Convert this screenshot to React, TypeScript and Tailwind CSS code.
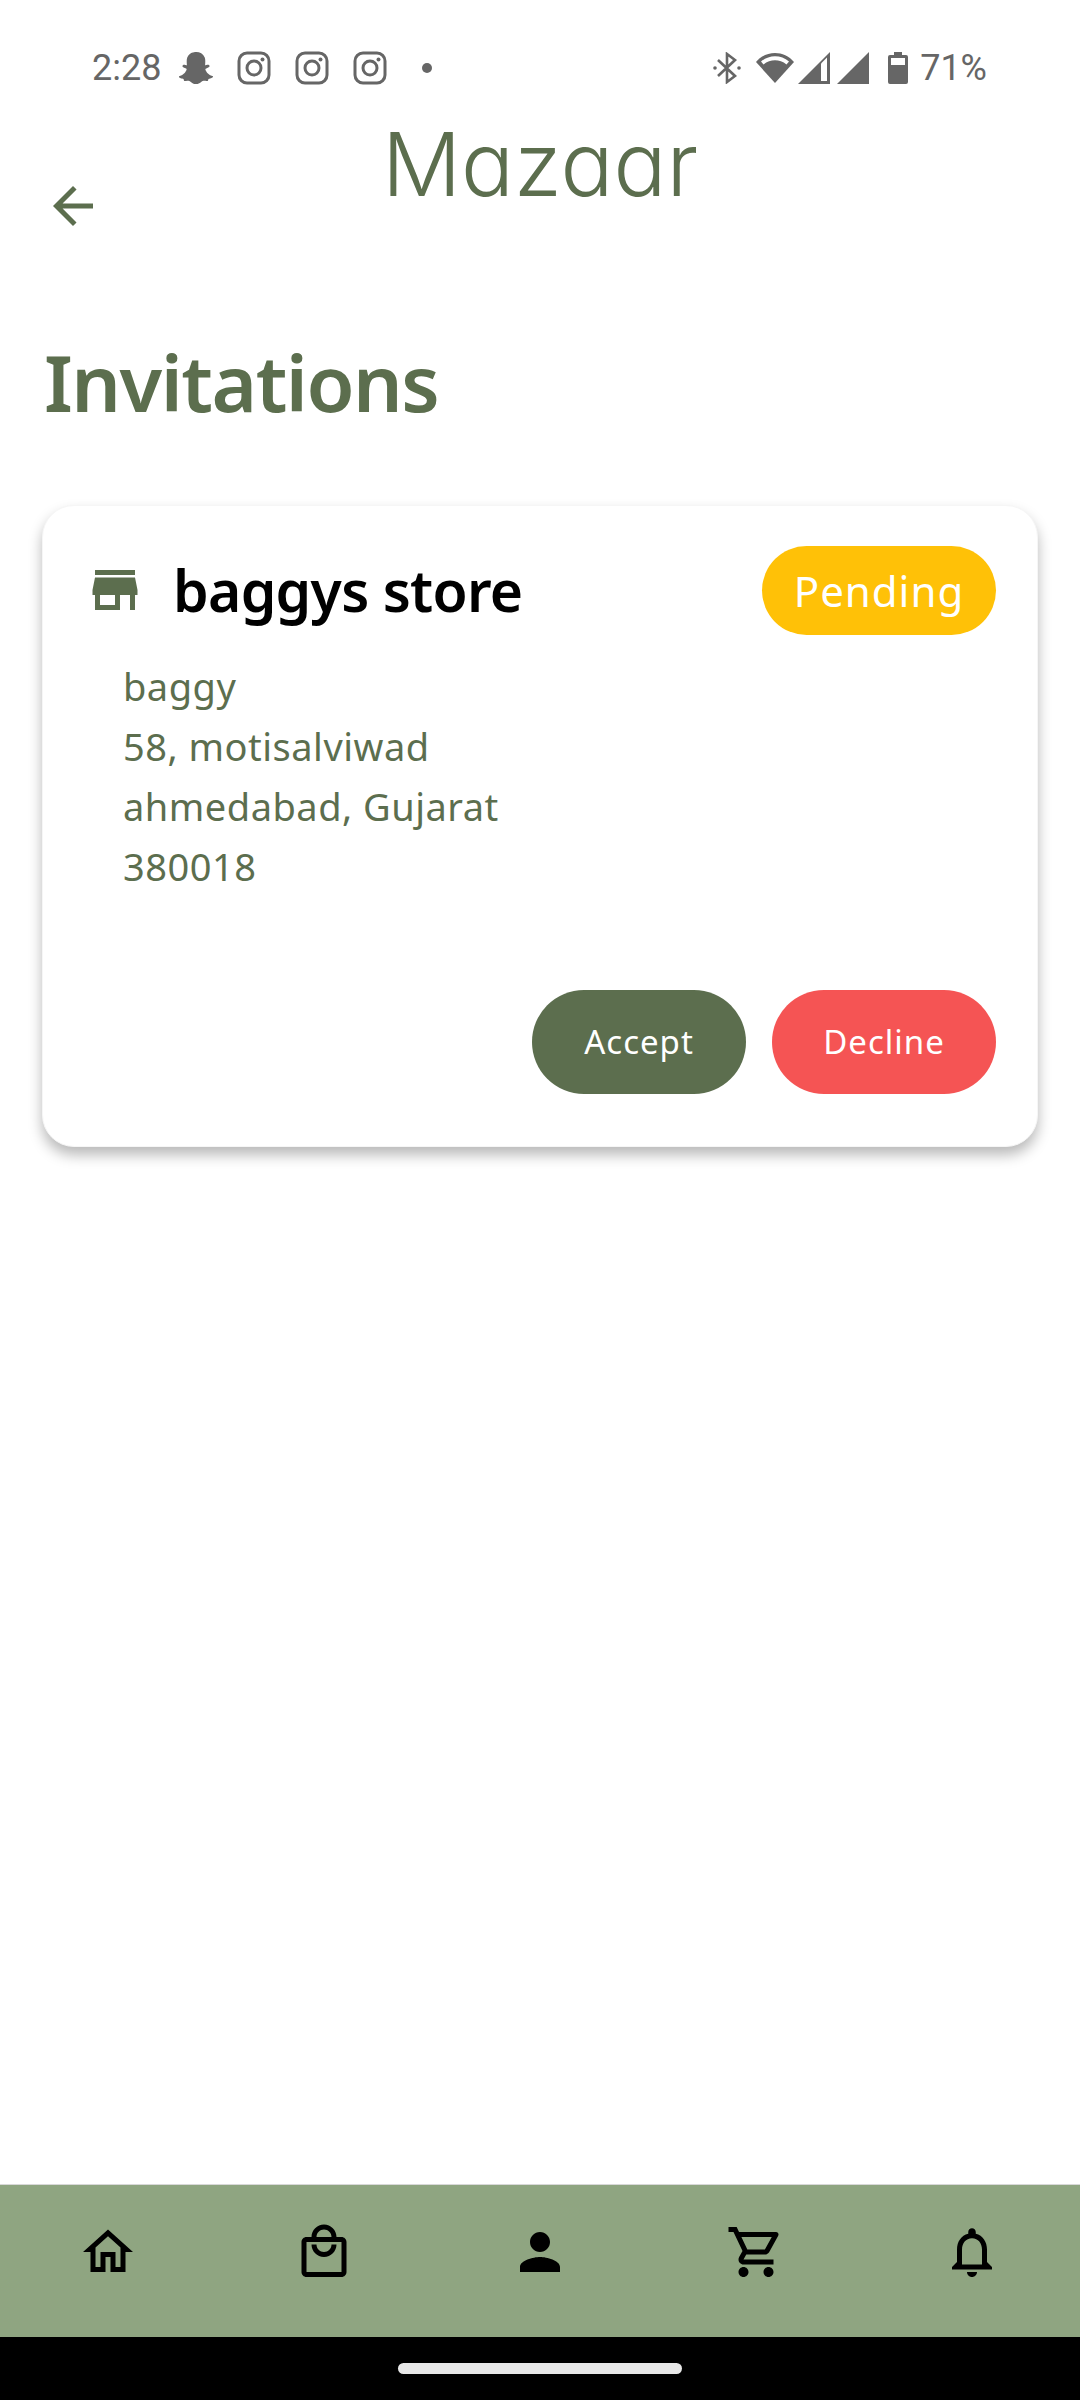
import { FaSnapchatGhost } from 'react-icons/fa';

const GREEN = 'text-[#5c6e4e]';

function Mi({ d, className }: { d: string; className?: string }) {
  return (
    <svg viewBox="0 0 24 24" fill="currentColor" className={className}>
      <path d={d} />
    </svg>
  );
}

function Insta() {
  return (
    <svg viewBox="0 0 34 34" fill="none" stroke="#666" strokeWidth="3" className="w-[34px] h-[34px]">
      <rect x="2" y="2" width="30" height="30" rx="8" />
      <circle cx="17" cy="17" r="7" />
      <circle cx="25.5" cy="8.5" r="2" fill="#666" stroke="none" />
    </svg>
  );
}

const navIcons = [
  'M12 5.69l5 4.5V18h-2v-6H9v6H7v-7.81l5-4.5M12 3L2 12h3v8h6v-6h2v6h6v-8h3L12 3z',
  'M19 6h-2c0-2.76-2.24-5-5-5S7 3.24 7 6H5c-1.1 0-2 .9-2 2v12c0 1.1.9 2 2 2h14c1.1 0 2-.9 2-2V8c0-1.1-.9-2-2-2zm-7-3c1.66 0 3 1.34 3 3H9c0-1.66 1.34-3 3-3zm7 17H5V8h14v12zm-7-8c-1.66 0-3-1.34-3-3H7c0 2.76 2.24 5 5 5s5-2.24 5-5h-2c0 1.66-1.34 3-3 3z',
  'M12 12c2.21 0 4-1.79 4-4s-1.79-4-4-4-4 1.79-4 4 1.79 4 4 4zm0 2c-2.67 0-8 1.34-8 4v2h16v-2c0-2.66-5.33-4-8-4z',
  'M15.55 13c.75 0 1.41-.41 1.75-1.03l3.58-6.49c.37-.66-.11-1.48-.87-1.48H5.21l-.94-2H1v2h2l3.6 7.59-1.35 2.44C4.52 15.37 5.48 17 7 17h12v-2H7l1.1-2h7.45zM6.16 6h12.15l-2.76 5H8.53L6.16 6zM7 18c-1.1 0-1.99.9-1.99 2S5.9 22 7 22s2-.9 2-2-.9-2-2-2zm10 0c-1.1 0-1.99.9-1.99 2s.89 2 1.99 2 2-.9 2-2-.9-2-2-2z',
  'M12 22c1.1 0 2-.9 2-2h-4c0 1.1.9 2 2 2zm6-6v-5c0-3.07-1.63-5.64-4.5-6.32V4c0-.83-.67-1.5-1.5-1.5s-1.5.67-1.5 1.5v.68C7.64 5.36 6 7.92 6 11v5l-2 2v1h16v-1l-2-2zm-2 1H8v-6c0-2.48 1.51-4.5 4-4.5s4 2.02 4 4.5v6z',
];

function StatusBar() {
  return (
    <div className="h-[92px] pt-[44px] pl-[92px] pr-[93px] flex items-start justify-between text-[#666] font-['Roboto',sans-serif] text-[36px] leading-[48px]">
      <div className="flex items-center h-[48px]">
        <span className="w-[72px]">2:28</span>
        <FaSnapchatGhost className="w-[36px] h-[34px] ml-[14px] text-[#666]" />
        <div className="flex items-center gap-[24px] ml-[23px]">
          <Insta />
          <Insta />
          <Insta />
        </div>
        <div className="w-[10px] h-[10px] rounded-full bg-[#666] ml-[35px]" />
      </div>
      <div className="flex items-center h-[48px]">
        <svg viewBox="0 0 28 32" className="w-[28px] h-[32px]" fill="none" stroke="#666" strokeWidth="2.6">
          <path d="M5 8l17 16-8 6V2l8 6L5 24" />
          <circle cx="2" cy="16" r="1.8" fill="#666" stroke="none" />
          <circle cx="26" cy="16" r="1.8" fill="#666" stroke="none" />
        </svg>
        <svg viewBox="0 0 40 32" className="w-[40px] h-[32px] ml-[14px]">
          <path d="M20 31L1 10C6 4 13 1 20 1s14 3 19 9L20 31z" fill="#666" />
          <path d="M6 9.5C10 6 15 4.2 20 4.2S30 6 34 9.5L31.5 12.5C28 9.5 24 8.2 20 8.2S12 9.5 8.5 12.5z" fill="#fff" />
        </svg>
        <svg viewBox="0 0 32 32" className="w-[32px] h-[32px] ml-[3px]">
          <path d="M0 32L32 0v32z" fill="#666" />
          <path d="M23 11.5l6-6V29h-6z" fill="#fff" />
        </svg>
        <svg viewBox="0 0 32 32" className="w-[32px] h-[32px] ml-[7px]">
          <path d="M0 32L32 0v32z" fill="#666" />
        </svg>
        <svg viewBox="0 0 20 32" className="w-[20px] h-[32px] ml-[19px]">
          <path d="M6 0h8v3h4a2 2 0 0 1 2 2v25a2 2 0 0 1-2 2H2a2 2 0 0 1-2-2V5a2 2 0 0 1 2-2h4z" fill="#666" />
          <rect x="3" y="6" width="14" height="7" fill="#fff" />
        </svg>
        <span className="ml-[12px]">71%</span>
      </div>
    </div>
  );
}

export default function App() {
  return (
    <div className="w-[1080px] h-[2400px] bg-white flex flex-col overflow-hidden font-['Noto_Sans',sans-serif]">
      <StatusBar />

      <div className="relative h-[130px] pt-[22px] flex justify-center">
        <span className={`font-['Inter',sans-serif] [font-feature-settings:'cv11'] font-[350] text-[88px] leading-[100px] ${GREEN}`}>Mazaar</span>
        <Mi
          d="M20 11H7.83l5.59-5.59L12 4l-8 8 8 8 1.41-1.41L7.83 13H20v-2z"
          className={`absolute left-[43px] top-[84px] w-[60px] h-[60px] ${GREEN}`}
        />
      </div>

      <h1 className={`mt-[110px] ml-[44px] text-[78px] leading-[100px] font-semibold tracking-[-1.5px] ${GREEN}`}>Invitations</h1>

      <div className="mx-[42px] mt-[73px] h-[642px] bg-white rounded-[32px] shadow-[0_8px_14px_rgba(0,0,0,0.28)] border border-[#f6f6f6] pt-[40px] pl-[48px] pr-[41px] flex flex-col">
        <div className="flex items-start justify-between">
          <div className="flex items-center h-[88px]">
            <Mi
              d="M20 4H4v2h16V4zm1 10v-2l-1-5H4l-1 5v2h1v6h10v-6h4v6h2v-6h1zm-9 4H6v-4h6v4z"
              className={`w-[60px] h-[60px] -ml-[6px] ${GREEN}`}
            />
            <span className="ml-[28px] text-[57px] leading-[88px] font-semibold tracking-[-0.7px] text-black">baggys store</span>
          </div>
          <div className="h-[89px] w-[234px] rounded-full bg-[#ffc107] flex items-center justify-center text-white text-[42px] tracking-[1px]">Pending</div>
        </div>
        <div className={`ml-[32px] mt-[21px] text-[38px] leading-[60px] tracking-[0.5px] ${GREEN}`}>
          <div>baggy</div>
          <div>58, motisalviwad</div>
          <div>ahmedabad, Gujarat</div>
          <div>380018</div>
        </div>
        <div className="mt-[94px] flex justify-end gap-[26px]">
          <div className="w-[214px] h-[104px] rounded-full bg-[#5c6e4e] flex items-center justify-center text-white text-[33px] tracking-[1px]">Accept</div>
          <div className="w-[224px] h-[104px] rounded-full bg-[#f55454] flex items-center justify-center text-white text-[33px] tracking-[1px]">Decline</div>
        </div>
      </div>

      <div className="mt-auto h-[153px] bg-[#8fa581] border-t border-[#d8d8d8] flex">
        {navIcons.map((d) => (
          <div key={d} className="flex-1 flex justify-center pt-[37px]">
            <Mi d={d} className="w-[60px] h-[60px] text-black" />
          </div>
        ))}
      </div>
      <div className="h-[63px] bg-black flex justify-center pt-[26px]">
        <div className="w-[284px] h-[11px] rounded-full bg-[#e8e8e8]" />
      </div>
    </div>
  );
}
